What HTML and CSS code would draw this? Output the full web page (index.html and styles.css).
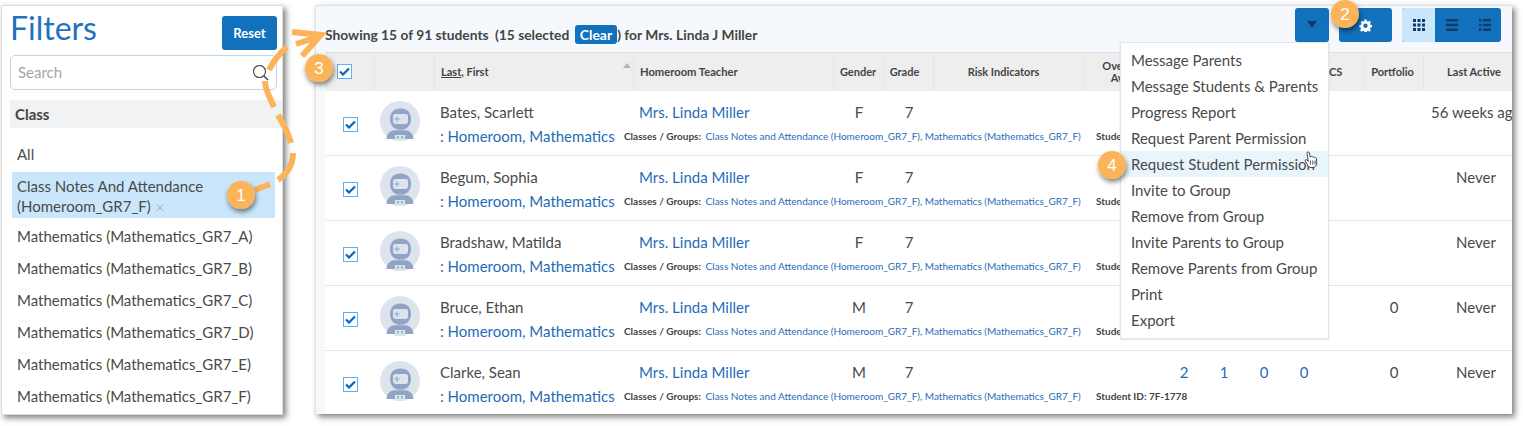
FILE: index.html
```html
<!DOCTYPE html>
<html lang="en">
<head>
<meta charset="utf-8">
<title>Filters and students</title>
<link rel="stylesheet" href="styles.css">
</head>
<body>
<div class="page">
  <aside class="filters">
    <div class="filters-head">
      <h1 class="filters-title">Filters</h1>
      <button class="reset">Reset</button>
    </div>
    <div class="search">
      <span class="search-text">Search</span>
      <svg class="search-icon" width="16" height="16" viewBox="0 0 16 16"><circle cx="6.500" cy="6.500" r="6" fill="none" stroke="#444" stroke-width="1.100"/><path d="M11 11l4 4" stroke="#444" stroke-width="1.400"/></svg>
    </div>
    <div class="class-head">Class</div>
    <ul class="class-list">
      <li class="class-item">All</li>
      <li class="class-item selected">Class Notes And Attendance (Homeroom_GR7_F) <span class="x">✕</span></li>
      <li class="class-item">Mathematics (Mathematics_GR7_A)</li>
      <li class="class-item">Mathematics (Mathematics_GR7_B)</li>
      <li class="class-item">Mathematics (Mathematics_GR7_C)</li>
      <li class="class-item">Mathematics (Mathematics_GR7_D)</li>
      <li class="class-item">Mathematics (Mathematics_GR7_E)</li>
      <li class="class-item">Mathematics (Mathematics_GR7_F)</li>
    </ul>
  </aside>

  <main class="students">
    <div class="toolbar">
      <div class="summary">Showing 15 of 91 students <span class="sel">(15 selected <span class="clear">Clear</span>) for Mrs. Linda J Miller</span></div>
      <button class="btn btn-drop"><svg width="12" height="8" viewBox="0 0 12 8"><path d="M1 0h10L6 7z" fill="#0f3b6c"/></svg></button>
      <button class="btn btn-gear"><svg width="13" height="13" viewBox="0 0 24 24"><path fill="#fff" fill-rule="evenodd" d="M10 1h4l.6 3.200 2 .8L19.300 3.200l2.800 2.800-1.900 2.700.9 2 3.200.6v4l-3.200.6-.9 2 1.900 2.700-2.800 2.800-2.700-1.900-2 .9-.6 3.200h-4l-.6-3.200-2-.9-2.700 1.900-2.800-2.800 1.900-2.700-.9-2L.7 15.100v-4l3.200-.6.900-2L2.900 5.900 5.700 3.100 8.400 5l1-.8zM12 8.500a4 4 0 1 0 0 8 4 4 0 0 0 0-8z"/></svg></button>
      <div class="views">
        <span class="view view-on"><svg width="12" height="12" viewBox="0 0 12 12"><path fill="#0f3b6c" d="M0 0h3v3H0zM4.500 0h3v3h-3zM9 0h3v3H9zM0 4.500h3v3H0zM4.500 4.500h3v3h-3zM9 4.500h3v3H9zM0 9h3v3H0zM4.500 9h3v3h-3zM9 9h3v3H9z"/></svg></span>
        <span class="view"><svg width="12" height="12" viewBox="0 0 12 12"><path fill="#0f3b6c" d="M0 0h12v2.400H0zM0 4.800h12v2.400H0zM0 9.600h12V12H0z"/></svg></span>
        <span class="view"><svg width="12" height="12" viewBox="0 0 12 12"><path fill="#0f3b6c" d="M0 0h2.500v2.400H0zM4 0h8v2.400H4zM0 4.800h2.500v2.400H0zM4 4.800h8v2.400H4zM0 9.600h2.500V12H0zM4 9.600h8V12H4z"/></svg></span>
      </div>
    </div>

    <div class="table">
      <div class="grid head">
        <div class="hc hc-check"><span class="check"><svg width="11" height="9" viewBox="0 0 11 9"><path d="M1 4.500l3 3L10 1.500" fill="none" stroke="#0a65b5" stroke-width="2.200"/></svg></span></div>
        <div class="hc"></div>
        <div class="hc hc-name"><span><u>Last</u>, First</span><i class="sort"></i></div>
        <div class="hc hc-teacher">Homeroom Teacher</div>
        <div class="hc hc-center hc-gender">Gender</div>
        <div class="hc hc-center hc-grade">Grade</div>
        <div class="hc hc-center hc-risk">Risk Indicators</div>
        <div class="hc hc-center hc-over">Overall<br>Avg</div>
        <div class="hc hc-plain"></div>
        <div class="hc hc-plain"></div>
        <div class="hc hc-plain"></div>
        <div class="hc hc-plain"></div>
        <div class="hc hc-cs">CS</div>
        <div class="hc hc-center hc-port">Portfolio</div>
        <div class="hc hc-center hc-last">Last Active</div>
      </div>

      <div class="grid row">
        <div class="cell-check"><span class="check"><svg width="11" height="9" viewBox="0 0 11 9"><path d="M1 4.500l3 3L10 1.500" fill="none" stroke="#0a65b5" stroke-width="2.200"/></svg></span></div>
        <div class="cell-avatar"><svg class="avatar" width="40" height="40" viewBox="0 0 40 40"><use href="#robot"/></svg></div>
        <div class="name">Bates, Scarlett</div>
        <a class="teacher">Mrs. Linda Miller</a>
        <div class="mid">F</div><div class="mid grade">7</div>
        <div></div><div></div><div></div><div></div><div></div><div></div><div></div><div class="mid"></div>
        <div class="last">56 weeks ago</div>
        <div class="line2"><a class="hm">: Homeroom, Mathematics</a><div class="groups"><b>Classes / Groups:</b> <a>Class Notes and Attendance (Homeroom_GR7_F), Mathematics (Mathematics_GR7_F)</a></div><b class="sid">Student ID:</b></div>
      </div>
      <div class="grid row">
        <div class="cell-check"><span class="check"><svg width="11" height="9" viewBox="0 0 11 9"><path d="M1 4.500l3 3L10 1.500" fill="none" stroke="#0a65b5" stroke-width="2.200"/></svg></span></div>
        <div class="cell-avatar"><svg class="avatar" width="40" height="40" viewBox="0 0 40 40"><use href="#robot"/></svg></div>
        <div class="name">Begum, Sophia</div>
        <a class="teacher">Mrs. Linda Miller</a>
        <div class="mid">F</div><div class="mid grade">7</div>
        <div></div><div></div><div></div><div></div><div></div><div></div><div></div><div class="mid"></div>
        <div class="last">Never</div>
        <div class="line2"><a class="hm">: Homeroom, Mathematics</a><div class="groups"><b>Classes / Groups:</b> <a>Class Notes and Attendance (Homeroom_GR7_F), Mathematics (Mathematics_GR7_F)</a></div><b class="sid">Student ID:</b></div>
      </div>
      <div class="grid row">
        <div class="cell-check"><span class="check"><svg width="11" height="9" viewBox="0 0 11 9"><path d="M1 4.500l3 3L10 1.500" fill="none" stroke="#0a65b5" stroke-width="2.200"/></svg></span></div>
        <div class="cell-avatar"><svg class="avatar" width="40" height="40" viewBox="0 0 40 40"><use href="#robot"/></svg></div>
        <div class="name">Bradshaw, Matilda</div>
        <a class="teacher">Mrs. Linda Miller</a>
        <div class="mid">F</div><div class="mid grade">7</div>
        <div></div><div></div><div></div><div></div><div></div><div></div><div></div><div class="mid"></div>
        <div class="last">Never</div>
        <div class="line2"><a class="hm">: Homeroom, Mathematics</a><div class="groups"><b>Classes / Groups:</b> <a>Class Notes and Attendance (Homeroom_GR7_F), Mathematics (Mathematics_GR7_F)</a></div><b class="sid">Student ID:</b></div>
      </div>
      <div class="grid row">
        <div class="cell-check"><span class="check"><svg width="11" height="9" viewBox="0 0 11 9"><path d="M1 4.500l3 3L10 1.500" fill="none" stroke="#0a65b5" stroke-width="2.200"/></svg></span></div>
        <div class="cell-avatar"><svg class="avatar" width="40" height="40" viewBox="0 0 40 40"><use href="#robot"/></svg></div>
        <div class="name">Bruce, Ethan</div>
        <a class="teacher">Mrs. Linda Miller</a>
        <div class="mid">M</div><div class="mid grade">7</div>
        <div></div><div></div><div></div><div></div><div></div><div></div><div></div><div class="mid">0</div>
        <div class="last">Never</div>
        <div class="line2"><a class="hm">: Homeroom, Mathematics</a><div class="groups"><b>Classes / Groups:</b> <a>Class Notes and Attendance (Homeroom_GR7_F), Mathematics (Mathematics_GR7_F)</a></div><b class="sid">Student ID:</b></div>
      </div>
      <div class="grid row">
        <div class="cell-check"><span class="check"><svg width="11" height="9" viewBox="0 0 11 9"><path d="M1 4.500l3 3L10 1.500" fill="none" stroke="#0a65b5" stroke-width="2.200"/></svg></span></div>
        <div class="cell-avatar"><svg class="avatar" width="40" height="40" viewBox="0 0 40 40"><use href="#robot"/></svg></div>
        <div class="name">Clarke, Sean</div>
        <a class="teacher">Mrs. Linda Miller</a>
        <div class="mid">M</div><div class="mid grade">7</div>
        <div></div><div></div><a class="mid num">2</a><a class="mid num">1</a><a class="mid num">0</a><a class="mid num">0</a><div></div><div class="mid">0</div>
        <div class="last">Never</div>
        <div class="line2"><a class="hm">: Homeroom, Mathematics</a><div class="groups"><b>Classes / Groups:</b> <a>Class Notes and Attendance (Homeroom_GR7_F), Mathematics (Mathematics_GR7_F)</a></div><b class="sid">Student ID: 7F-1778</b></div>
      </div>
    </div>
  </main>
</div>

<ul class="menu">
  <li>Message Parents</li>
  <li>Message Students &amp; Parents</li>
  <li>Progress Report</li>
  <li>Request Parent Permission</li>
  <li class="hover">Request Student Permission</li>
  <li>Invite to Group</li>
  <li>Remove from Group</li>
  <li>Invite Parents to Group</li>
  <li>Remove Parents from Group</li>
  <li>Print</li>
  <li>Export</li>
</ul>

<svg class="overlay" width="1523" height="426" viewBox="0 0 1523 426">
  <defs>
    <symbol id="robot" viewBox="0 0 40 40">
      <circle cx="20" cy="20" r="20" fill="#dde4ee"/>
      <path fill="#8fa5c3" d="M20.500 7.500c-6.500 0-10.500 4-10.500 10.500 0 3.600 1.200 6.500 3.500 8.500 1.800 1.500 4.200 2.300 7 2.300s5.200-.8 7-2.300c2.300-2 3.500-4.900 3.500-8.500 0-6.500-4-10.500-10.500-10.500z"/>
      <path fill="#dde4ee" d="M13 15.500c0-1.800 1.200-2.500 3-2.500h9.500c1.500 0 2.500.9 2.500 2.300v5.200c0 1.500-1.200 2.500-2.700 2.500H16c-1.800 0-3-1-3-2.700z"/>
      <path fill="#8fa5c3" d="M16.500 15.500h1v2.100h2.100v1h-2.100v2.100h-1v-2.100h-2.100v-1h2.100zM6.500 38c.4-5.500 3.500-8.200 8-8.700h11c4.500.5 7.600 3.200 8 8.700z"/>
      <path fill="#dde4ee" d="M15 34h10v6H15z"/>
      <path fill="#8fa5c3" d="M17.200 35h1.600v2.500h-1.600zM21.200 35h1.600v2.500h-1.600z"/>
    </symbol>
    <filter id="soft" x="-40%" y="-40%" width="180%" height="180%"><feDropShadow dx="1" dy="3" stdDeviation="2.500" flood-color="#000" flood-opacity=".5"/></filter>
  </defs>
  <g fill="none" stroke="#fbb45a" stroke-width="6">
    <path d="M255 190L270 184"/>
    <path d="M278 180C288 173 293 164 293 153"/>
    <path d="M291 143C288 132 283 124 278 115"/>
    <path d="M274 107C270 98 265 90 265 81"/>
    <path d="M269 70C274 60 281 52 287 47"/>
    <path d="M292 32L321 35L302 56M296 44L318 37"/>
  </g>
  <g class="badges">
    <g filter="url(#soft)"><circle cx="241" cy="195" r="14" fill="#fbb45a"/></g>
    <text x="241" y="201">1</text>
    <g filter="url(#soft)"><circle cx="1345" cy="14" r="14" fill="#fbb45a"/></g>
    <text x="1345" y="20">2</text>
    <g filter="url(#soft)"><circle cx="319" cy="68" r="14" fill="#fbb45a"/></g>
    <text x="319" y="74">3</text>
    <g filter="url(#soft)"><circle cx="1112" cy="165" r="14" fill="#fbb45a"/></g>
    <text x="1112" y="171">4</text>
  </g>
  <path d="M1307 153c0-1.500 2.200-1.500 2.400 0l.8 4 .6-.5c1-.4 1.600.1 1.800.6.900-.6 1.800-.2 2 .5 1-.4 1.800.2 1.900 1l.2 4.500c0 2.400-1.400 4.400-3.700 4.400h-2c-1.600 0-2.500-1-3.400-2.400l-2.300-4.100c-.6-1.200.8-2 1.700-1l1.300 1.500zM1310.500 160.500v4M1312.800 160.500v4M1315 160.500v4" fill="#fff" stroke="#222" stroke-width=".8"/>
</svg>
</body>
</html>
```
FILE: styles.css
```css
* { box-sizing: border-box; }
html, body { margin: 0; padding: 0; background: #fff; }
body {
  width: 1523px; height: 426px; position: relative; overflow: hidden;
  font-family: Lato, "Open Sans", sans-serif; font-size: 15px; color: #4a4a4a;
}
a { color: #1f6cb8; }
ul { list-style: none; margin: 0; padding: 0; }
button { font-family: inherit; border: 0; }

.page { display: flex; align-items: flex-start; padding: 5px 0 0 1px; gap: 32px; }

/* Filters */
.filters {
  width: 282px; height: 410px; background: #fff; border: 1px solid #dedede;
  box-shadow: 3px 3px 6px rgba(0,0,0,.5); padding: 0 5px 0 8px;
}
.filters-head { display: flex; justify-content: space-between; align-items: flex-start; padding: 10px 0 0; height: 49px; }
.filters-title { margin: -8px 0 0; font-size: 32px; line-height: 40px; font-weight: 400; color: #1f72bd; }
.reset {
  width: 55px; height: 34px; background: #1271bd; color: #fff; border-radius: 3px;
  font-size: 13px; font-weight: 700; padding: 0;
}
.search {
  display: flex; align-items: center; justify-content: space-between; height: 35px; width: 267px;
  border: 1px solid #b9d6ec; border-radius: 5px; padding: 0 6px 0 7px;
}
.search-text { color: #a5a5a5; font-size: 15px; margin-top: -2px; }
.search-icon { margin: 0 1px 0 0; }
.class-head {
  margin-top: 10px; height: 28px; width: 272px; line-height: 29px; background: #f1f2f3; padding-left: 5px;
  font-weight: 700; font-size: 15px; color: #444;
}
.class-list { margin-top: 10px; padding-left: 2px; }
.class-item { height: 32px; line-height: 32px; padding-left: 5px; font-size: 15px; width: 263px; }
.class-item.selected {
  height: 46px; line-height: 20px; background: #c9e6fb; margin: 2px 0 2px; padding: 4px 20px 0 5px;
}
.x { color: #bbb; font-size: 12px; }

/* Students */
.students {
  width: 1197px; height: 409px; background: #f5f9fd; border: 1px solid #dde2e8; border-right: 0; border-bottom: 0;
  box-shadow: 3px 3px 6px rgba(0,0,0,.5); overflow: hidden; position: relative;
}
.toolbar { display: flex; align-items: flex-start; height: 46px; padding: 2px 11px 0 9px; }
.summary { flex: 1; margin-top: 18px; font-size: 13.800px; font-weight: 700; color: #444; white-space: nowrap; }
.sel { margin-left: 3px; }
.clear { background: #1271bd; color: #fff; border-radius: 3px; padding: 1px 5px; margin: 0 0 0 2px; font-size: 14px; }
.btn { height: 34px; background: #1271bd; border-radius: 3px; padding: 0; display: flex; align-items: center; justify-content: center; }
.btn-drop { width: 34px; margin-right: 10px; }
.btn-gear { width: 53px; margin-right: 10px; padding-right: 0; }
.views { display: flex; width: 99px; height: 34px; border-radius: 3px; overflow: hidden; background: #1271bd; }
.view { width: 33px; display: flex; align-items: center; justify-content: center; }
.view-on { background: #c9e6fb; }

.table { margin-left: 9px; width: 1203px; background: #fff; border-top: 1px solid #d9dfe5; }
.grid {
  display: grid;
  grid-template-columns: 50px 60px 199px 200px 50px 50px 150px 80px 40px 40px 40px 40px 40px 60px 104px;
}
.head { height: 38px; background: #eee; font-size: 11px; font-weight: 700; color: #444; }
.hc { display: flex; align-items: center; border-right: 1px solid #e6e6e6; position: relative; white-space: nowrap; line-height: 12px; }
.hc-plain { border-right: 0; }
.hc-check { padding-left: 12px; align-items: flex-start; padding-top: 11px; }
.hc-name { padding-left: 6px; }
.sort { position: absolute; right: 2px; top: 10px; width: 0; height: 0; border: 4px solid transparent; border-top: 0; border-bottom: 5px solid #b5b5b5; }
.hc-teacher { padding-left: 6px; font-size: 11.200px; }
.hc-center { justify-content: center; text-align: center; }
.hc-gender { padding-right: 1px; }
.hc-grade { padding-right: 8px; }
.hc-risk { padding-right: 10px; }
.hc-over { padding: 0 8px 0 0; border-right: 0; }
.hc-cs { padding-left: 5px; }
.hc-port { padding-right: 2px; }
.hc-last { border-right: 0; justify-content: flex-end; padding-right: 27px; }

.check { width: 15px; height: 15px; background: #fff; border: 1px solid #5cb0f5; display: flex; align-items: center; justify-content: center; }

.row { height: 65px; background: #fff; border-bottom: 1px solid #e4e7ea; grid-template-rows: 24px 24px; padding-top: 9px; }
.cell-check { grid-row: 1 / 3; padding: 17px 0 0 18px; }
.cell-avatar { grid-row: 1 / 3; padding: 1px 0 0 5px; }
.avatar { display: block; }
.name { padding-left: 5px; line-height: 24px; white-space: nowrap; }
.teacher { padding-left: 5px; line-height: 24px; white-space: nowrap; }
.mid { text-align: center; line-height: 24px; }
.num { color: #1f6cb8; }
.last { text-align: center; line-height: 24px; white-space: nowrap; }
.line2 { grid-column: 3 / -1; display: flex; align-items: center; height: 24px; }
.hm { width: 189px; padding-left: 5px; font-size: 15px; white-space: nowrap; }
.groups { width: 472px; font-size: 10px; white-space: nowrap; color: #444; }
.groups b { margin-right: 2px; }
.sid { font-size: 10px; white-space: nowrap; color: #444; }

/* Menu */
.menu {
  position: absolute; left: 1120px; top: 42px; width: 209px; height: 297px; padding-top: 4px;
  background: #fff; border: 1px solid #e3e6e9; box-shadow: 0 1px 2px rgba(0,0,0,.1);
}
.menu li { height: 26px; line-height: 26px; padding-left: 10px; font-size: 15px; white-space: nowrap; }
.menu .hover { background: #e9f5fc; }

/* Annotations */
.overlay { position: absolute; left: 0; top: 0; pointer-events: none; }
.badges text { fill: #fff; font-family: Arial, "Liberation Sans", sans-serif; font-size: 17px; text-anchor: middle; }
```
